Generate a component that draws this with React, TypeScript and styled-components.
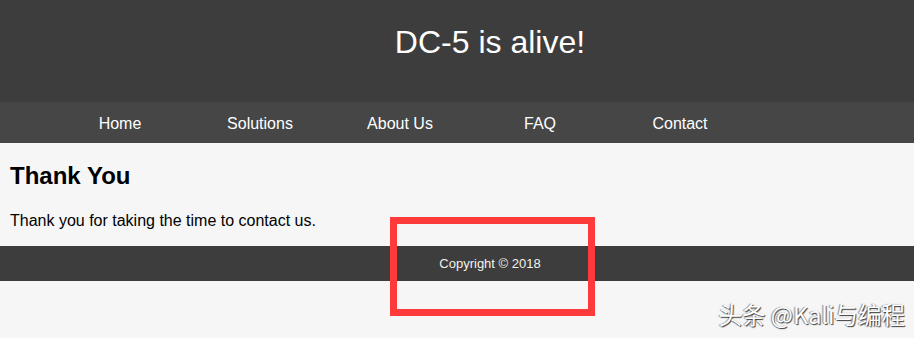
import styled, { createGlobalStyle } from 'styled-components'

const GlobalStyle = createGlobalStyle`
  html, body {
    margin: 0;
    padding: 0;
    background: #f6f6f6;
  }
  body {
    font-family: "Liberation Sans", Arial, sans-serif;
  }
`

const navItems = ['Home', 'Solutions', 'About Us', 'FAQ', 'Contact']

export default function App() {
  return (
    <Page>
      <GlobalStyle />
      <Header>
        <Title>DC-5 is alive!</Title>
      </Header>
      <Nav>
        {navItems.map((item) => (
          <NavLink key={item} href="#">
            {item}
          </NavLink>
        ))}
      </Nav>
      <Main>
        <Heading>Thank You</Heading>
        <Text>Thank you for taking the time to contact us.</Text>
      </Main>
      <Footer>Copyright © 2018</Footer>
      <Highlight />
      <Watermark>头条 @Kali与编程</Watermark>
    </Page>
  )
}

const Page = styled.div`
  position: relative;
  width: 914px;
  height: 338px;
  overflow: hidden;
  background: #f6f6f6;
`

const Header = styled.header`
  height: 102px;
  box-sizing: border-box;
  padding: 24px 0 0 66px;
  background: #3d3d3d;
  text-align: center;
`

const Title = styled.h1`
  margin: 0;
  font-size: 32px;
  font-weight: normal;
  line-height: 37px;
  color: #ffffff;
`

const Nav = styled.nav`
  display: flex;
  height: 41px;
  box-sizing: border-box;
  padding: 2px 0 0 50px;
  background: #464646;
`

const NavLink = styled.a`
  width: 140px;
  line-height: 39px;
  text-align: center;
  font-size: 16px;
  color: #ffffff;
  text-decoration: none;
`

const Main = styled.main`
  padding: 19px 10px 0;
  height: 103px;
  box-sizing: border-box;
`

const Heading = styled.h2`
  margin: 0 0 22px;
  font-size: 24px;
  font-weight: bold;
  color: #000000;
`

const Text = styled.p`
  margin: 0;
  font-size: 16px;
  color: #000000;
`

const Footer = styled.footer`
  height: 35px;
  padding-left: 66px;
  background: #3d3d3d;
  color: #f4f2e8;
  font-size: 13px;
  line-height: 35px;
  text-align: center;
`

const Highlight = styled.div`
  position: absolute;
  left: 390px;
  top: 217px;
  width: 205px;
  height: 99px;
  box-sizing: border-box;
  border: 7px solid #ff3a3a;
`

const Watermark = styled.div`
  position: absolute;
  right: 9px;
  top: 299px;
  font-family: "Noto Sans CJK SC", "Noto Sans", sans-serif;
  font-size: 23.5px;
  line-height: 30px;
  color: #ffffff;
  text-shadow: 1px 1px 1px rgba(0, 0, 0, 0.75), -1px 0 1px rgba(0, 0, 0, 0.45);
  white-space: nowrap;
`
